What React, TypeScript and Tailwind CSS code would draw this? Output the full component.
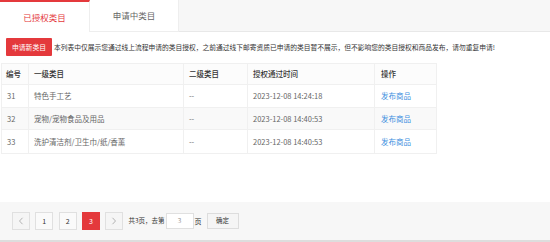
import React from "react";

const rows = [
  { id: "31", cat: "特色手工艺", sub: "--", time: "2023-12-08 14:24:18" },
  { id: "32", cat: "宠物/宠物食品及用品", sub: "--", time: "2023-12-08 14:40:53" },
  { id: "33", cat: "洗护清洁剂/卫生巾/纸/香薰", sub: "--", time: "2023-12-08 14:40:53" },
];

const font = { fontFamily: '"Noto Sans CJK SC", "Noto Sans", sans-serif' };

export default function App() {
  return (
    <div className="w-[550px] h-[242px] bg-white overflow-hidden flex flex-col" style={font}>
      {/* Tabs */}
      <div className="flex h-[32px] shrink-0">
        <div className="w-[90px] h-full bg-white border-t-2 border-[#e4393c] border-r border-r-[#eeeeee] flex items-center justify-center text-[8.5px] text-[#e4393c]">
          已授权类目
        </div>
        <div className="w-[89px] h-full bg-white border-r border-b border-[#eeeeee] flex items-center justify-center text-[8.5px] text-[#666666]">
          申请中类目
        </div>
        <div className="flex-1 h-full bg-[#f7f7f7] border-b border-[#e8e8e8]" />
      </div>

      {/* Notice */}
      <div className="flex items-center h-[18px] mt-[6px] pl-[6px]">
        <div className="w-[46px] h-[18px] bg-[#e4393c] text-white text-[6.8px] flex items-center justify-center rounded-[1px]">
          申请新类目
        </div>
        <div className="ml-[2px] text-[6.75px] text-[#333333] whitespace-nowrap tracking-[0px]">
          本列表中仅展示您通过线上流程申请的类目授权，之前通过线下邮寄资质已申请的类目暂不展示，但不影响您的类目授权和商品发布，请勿重复申请!
        </div>
      </div>

      {/* Table */}
      <div className="mt-[7px] ml-[1px] w-[436px] border border-[#f0f0f0] text-[7.5px]">
        <div className="grid grid-cols-[27px_155px_64px_127px_61px] h-[21px] bg-[#fcfcfc] text-[#333333] font-medium border-b border-[#f0f0f0]">
          <div className="flex items-center pl-[4px] border-r border-[#f0f0f0]">编号</div>
          <div className="flex items-center pl-[5px] border-r border-[#f0f0f0]">一级类目</div>
          <div className="flex items-center pl-[5px] border-r border-[#f0f0f0]">二级类目</div>
          <div className="flex items-center pl-[5px] border-r border-[#f0f0f0]">授权通过时间</div>
          <div className="flex items-center pl-[6px]">操作</div>
        </div>
        {rows.map((r, i) => (
          <div
            key={r.id}
            className={`grid grid-cols-[27px_155px_64px_127px_61px] h-[22.5px] text-[#666666] ${
              i < rows.length - 1 ? "border-b border-[#f0f0f0]" : ""
            } ${i === 1 ? "bg-[#f9f9f9]" : "bg-white"}`}
          >
            <div className="flex items-center pl-[5px] border-r border-[#f0f0f0]">{r.id}</div>
            <div className="flex items-center pl-[5px] border-r border-[#f0f0f0]">{r.cat}</div>
            <div className="flex items-center pl-[5px] border-r border-[#f0f0f0]">{r.sub}</div>
            <div className="flex items-center pl-[5px] border-r border-[#f0f0f0]">{r.time}</div>
            <div className="flex items-center pl-[6px] text-[#3d8fe0]">发布商品</div>
          </div>
        ))}
      </div>

      <div className="flex-1" />

      {/* Pagination */}
      <div className="h-[40px] shrink-0 bg-[#f7f7f7] border-b-2 border-[#dddddd] flex items-center pl-[12px] gap-[5.3px] text-[7px] text-[#333333]">
        <div className="w-[18px] h-[18px] border border-[#e0e0e0] bg-[#f5f5f5] flex items-center justify-center">
          <svg width="6" height="8" viewBox="0 0 6 8">
            <path d="M4.5 0.8 L1.5 4 L4.5 7.2" fill="none" stroke="#aaaaaa" strokeWidth="0.9" />
          </svg>
        </div>
        <div className="w-[18px] h-[18px] border border-[#e0e0e0] bg-[#fafafa] flex items-center justify-center">1</div>
        <div className="w-[18px] h-[18px] border border-[#e0e0e0] bg-[#fafafa] flex items-center justify-center">2</div>
        <div className="w-[18px] h-[18px] bg-[#e4393c] text-white flex items-center justify-center">3</div>
        <div className="w-[18px] h-[18px] border border-[#e0e0e0] bg-[#f5f5f5] flex items-center justify-center">
          <svg width="6" height="8" viewBox="0 0 6 8">
            <path d="M1.5 0.8 L4.5 4 L1.5 7.2" fill="none" stroke="#aaaaaa" strokeWidth="0.9" />
          </svg>
        </div>
        <div className="flex items-center text-[6.5px]">
          <span>共3页，去第</span>
          <div className="ml-[1px] w-[28px] h-[16px] bg-white border border-[#e0e0e0] flex items-center justify-center text-[#999999] text-[6.5px]">
            3
          </div>
          <span className="ml-[1px] text-[7px]">页</span>
          <div className="ml-[5px] w-[32px] h-[16px] bg-[#f5f5f5] border border-[#dddddd] flex items-center justify-center text-[6.5px]">
            确定
          </div>
        </div>
      </div>
    </div>
  );
}
